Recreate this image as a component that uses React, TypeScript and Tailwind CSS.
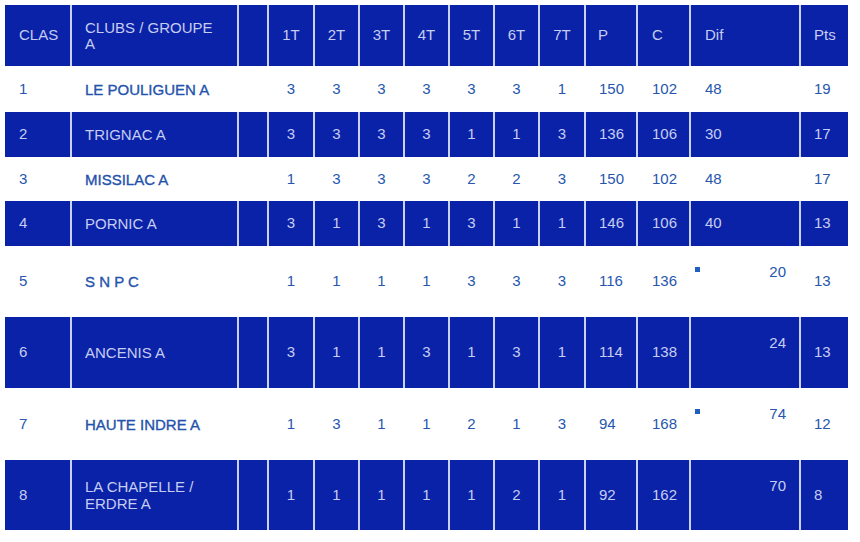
import React from "react";

type Row = {
  clas: string;
  club: React.ReactNode;
  t: string[];
  p: string;
  c: string;
  dif: string;
  pts: string;
  blue: boolean;
  h: string;
  tall?: boolean;
  mark?: boolean;
};

const rows: Row[] = [
  { clas: "1", club: "LE POULIGUEN A", t: ["3", "3", "3", "3", "3", "3", "1"], p: "150", c: "102", dif: "48", pts: "19", blue: false, h: "h-[46px]" },
  { clas: "2", club: "TRIGNAC A", t: ["3", "3", "3", "3", "1", "1", "3"], p: "136", c: "106", dif: "30", pts: "17", blue: true, h: "h-[45px]" },
  { clas: "3", club: "MISSILAC A", t: ["1", "3", "3", "3", "2", "2", "3"], p: "150", c: "102", dif: "48", pts: "17", blue: false, h: "h-[44px]" },
  { clas: "4", club: "PORNIC A", t: ["3", "1", "3", "1", "3", "1", "1"], p: "146", c: "106", dif: "40", pts: "13", blue: true, h: "h-[45px]" },
  { clas: "5", club: "S N P C", t: ["1", "1", "1", "1", "3", "3", "3"], p: "116", c: "136", dif: "20", pts: "13", blue: false, h: "h-[71px]", tall: true, mark: true },
  { clas: "6", club: "ANCENIS A", t: ["3", "1", "1", "3", "1", "3", "1"], p: "114", c: "138", dif: "24", pts: "13", blue: true, h: "h-[71px]", tall: true },
  { clas: "7", club: "HAUTE INDRE A", t: ["1", "3", "1", "1", "2", "1", "3"], p: "94", c: "168", dif: "74", pts: "12", blue: false, h: "h-[72px]", tall: true, mark: true },
  {
    clas: "8",
    club: (
      <>
        LA CHAPELLE /<br />
        ERDRE A
      </>
    ),
    t: ["1", "1", "1", "1", "1", "2", "1"],
    p: "92",
    c: "162",
    dif: "70",
    pts: "8",
    blue: true,
    h: "h-[70px]",
    tall: true,
  },
];

const tourW = ["w-[44px]", "w-[43px]", "w-[43px]", "w-[43px]", "w-[43px]", "w-[43px]", "w-[44px]"];

function DataRow({ r }: { r: Row }) {
  const cell = r.blue ? "bg-[#0a22a8] text-[#c6cdf1]" : "bg-white text-[#2656ad]";
  const nameCls = r.blue
    ? "text-[#c6cdf1]"
    : "text-[#1d4caa] [-webkit-text-stroke:0.35px_#1d4caa]";
  return (
    <div className={`flex gap-[2px] ${r.h} ${r.blue ? "bg-[#c9d2f3]" : "bg-white"}`}>
      <div className={`${cell} w-[65px] flex items-center pl-[14px]`}>{r.clas}</div>
      <div className={`${cell} ${nameCls} w-[165px] flex items-center pl-[13px] leading-[17px]`}>
        <div>{r.club}</div>
      </div>
      <div className={`${cell} w-[28px]`} />
      {r.t.map((v, i) => (
        <div key={i} className={`${cell} ${tourW[i]} flex items-center justify-center`}>
          {v}
        </div>
      ))}
      <div className={`${cell} w-[50px] flex items-center pl-[13px]`}>{r.p}</div>
      <div className={`${cell} w-[51px] flex items-center pl-[14px]`}>{r.c}</div>
      {r.tall ? (
        <div className={`${cell} w-[108px] relative flex justify-end pr-[13px] pt-[17px]`}>
          {r.mark && <span className="absolute left-[4px] top-[21px] w-[5px] h-[5px] bg-[#1f5fbf]" />}
          <span className="leading-[17px]">{r.dif}</span>
        </div>
      ) : (
        <div className={`${cell} w-[108px] flex items-center pl-[14px]`}>{r.dif}</div>
      )}
      <div className={`${cell} w-[47px] flex items-center pl-[13px]`}>{r.pts}</div>
    </div>
  );
}

export default function App() {
  const h = "bg-[#0a22a8] text-[#c6cdf1]";
  return (
    <div
      className="w-[860px] h-[542px] bg-white pt-[5px] pl-[5px] overflow-hidden text-[15px]"
      style={{ fontFamily: '"Liberation Sans", Arial, sans-serif' }}
    >
      <div className="flex flex-col w-[843px]">
        <div className="flex gap-[2px] h-[61px] bg-[#c9d2f3]">
          <div className={`${h} w-[65px] flex items-center pl-[14px]`}>CLAS</div>
          <div className={`${h} w-[165px] flex items-center pl-[13px] leading-[16px]`}>
            <div>
              CLUBS / GROUPE
              <br />A
            </div>
          </div>
          <div className={`${h} w-[28px]`} />
          {["1T", "2T", "3T", "4T", "5T", "6T", "7T"].map((t, i) => (
            <div key={t} className={`${h} ${tourW[i]} flex items-center justify-center`}>
              {t}
            </div>
          ))}
          <div className={`${h} w-[50px] flex items-center pl-[12px]`}>P</div>
          <div className={`${h} w-[51px] flex items-center pl-[14px]`}>C</div>
          <div className={`${h} w-[108px] flex items-center pl-[14px]`}>Dif</div>
          <div className={`${h} w-[47px] flex items-center pl-[13px]`}>Pts</div>
        </div>
        {rows.map((r, i) => (
          <DataRow key={i} r={r} />
        ))}
      </div>
    </div>
  );
}
